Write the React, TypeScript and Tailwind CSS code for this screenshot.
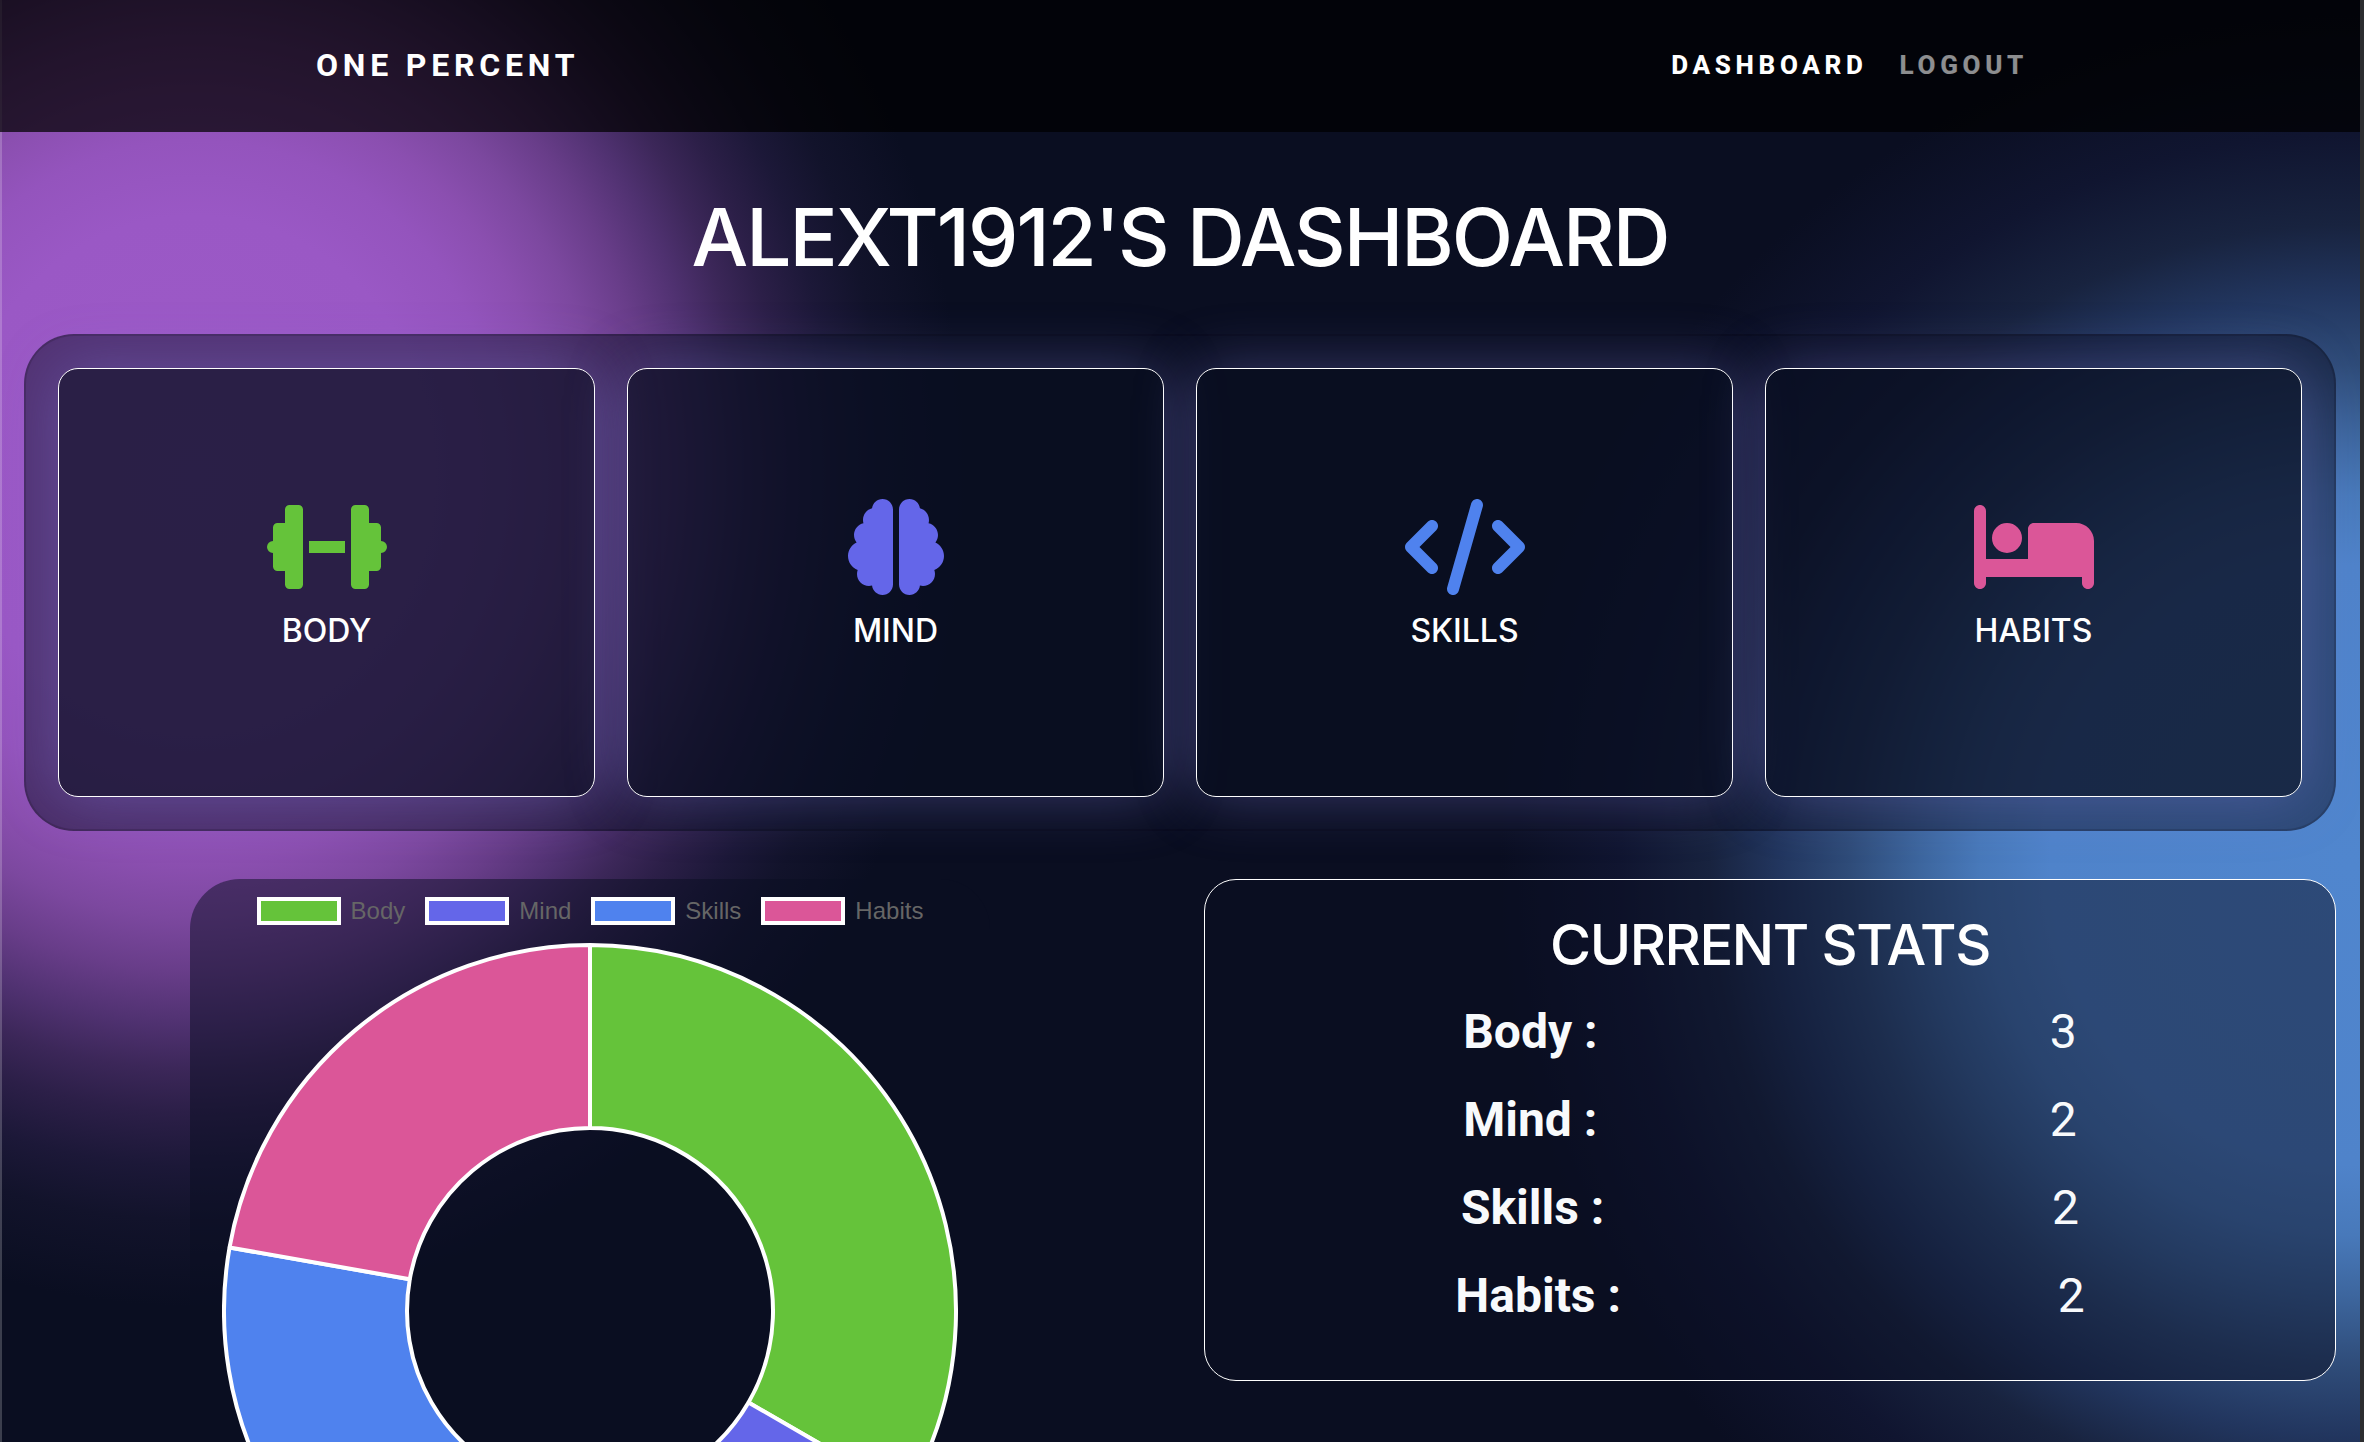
import { FaBed, FaBrain, FaCode } from "react-icons/fa6";
import type { ReactNode } from "react";

function Dumbbell({ className }: { className?: string }) {
  return (
    <svg viewBox="0 0 640 512" fill="currentColor" className={className} aria-hidden="true">
      <path d="M120 32h48a24 24 0 0 1 24 24v400a24 24 0 0 1-24 24h-48a24 24 0 0 1-24-24v-72H56a24 24 0 0 1-24-24v-72a32 32 0 0 1 0-64v-72a24 24 0 0 1 24-24h40V56a24 24 0 0 1 24-24z" />
      <path d="M520 32h-48a24 24 0 0 0-24 24v400a24 24 0 0 0 24 24h48a24 24 0 0 0 24-24v-72h40a24 24 0 0 0 24-24v-72a32 32 0 0 0 0-64v-72a24 24 0 0 0-24-24h-40V56a24 24 0 0 0-24-24z" />
      <path d="M224 224h192v64H224z" />
    </svg>
  );
}

type Area = { name: string; value: number; color: string; swatch: string; icon: ReactNode };

const areas: Area[] = [
  { name: "Body", value: 3, color: "#65c33a", swatch: "bg-[#65c33a]", icon: <Dumbbell className="h-24 w-[120px] text-[#65c33a]" /> },
  { name: "Mind", value: 2, color: "#6466e9", swatch: "bg-[#6466e9]", icon: <FaBrain className="h-24 w-24 text-[#6466e9]" /> },
  { name: "Skills", value: 2, color: "#4f82ee", swatch: "bg-[#4f82ee]", icon: <FaCode className="h-24 w-[120px] text-[#4f82ee]" /> },
  { name: "Habits", value: 2, color: "#db5698", swatch: "bg-[#db5698]", icon: <FaBed className="h-24 w-[120px] text-[#db5698]" /> },
];

const total = areas.reduce((sum, a) => sum + a.value, 0);

function point(radius: number, turn: number) {
  const angle = turn * 2 * Math.PI;
  return `${368 + radius * Math.sin(angle)} ${368 - radius * Math.cos(angle)}`;
}

function Doughnut() {
  let start = 0;
  return (
    <svg viewBox="0 0 736 736" className="block w-full" role="img" aria-label="Progress by area">
      {areas.map((a) => {
        const from = start / total;
        start += a.value;
        const to = start / total;
        return (
          <path
            key={a.name}
            d={`M${point(366, from)} A366 366 0 0 1 ${point(366, to)} L${point(183, to)} A183 183 0 0 0 ${point(183, from)} Z`}
            fill={a.color}
            stroke="#fff"
            strokeWidth={4}
            strokeLinejoin="bevel"
          />
        );
      })}
    </svg>
  );
}

export default function App() {
  return (
    <div className="h-screen overflow-hidden border-r-4 border-[#2c2d30] bg-[#0a0e21] bg-[radial-gradient(1000px_1080px_at_195px_475px,#9d5ac8_0%,#9a58c5_24%,#9454bd_31%,#8b4fb0_36%,#7c489f_41%,#683d89_46%,#4f3170_51%,#3c2759_55%,#2c1f48_59%,#1c1838_64%,#12132b_69%,#0a0e2100_77%),radial-gradient(circle_at_calc(100%_-_10px)_865px,#5086ce_0px,#4f83ca_300px,#4879ba_370px,#3d669e_430px,#2f4c79_500px,#22365f_570px,#18233f_640px,#101530_730px,#0a0e2100_850px)] text-white shadow-[inset_2px_0_0_rgba(255,255,255,0.2)]">
      <header className="bg-black/72">
        <div className="mx-auto flex h-[132px] w-full items-center justify-between pr-[332px] pb-[2px] pl-[316px] font-[Roboto,sans-serif] font-bold">
          <a href="#home" className="text-[32px] tracking-[0.15em]">ONE PERCENT</a>
          <nav className="flex gap-8 text-[26px] font-extrabold tracking-[0.18em]">
            <a href="#dashboard">DASHBOARD</a>
            <a href="#logout" className="text-white/55">LOGOUT</a>
          </nav>
        </div>
      </header>

      <main className="px-6">
        <h1 className="flex h-[202px] items-center justify-center pt-2 font-[Inter,sans-serif] text-[80px] font-medium tracking-tight">
          ALEXT1912'S DASHBOARD
        </h1>

        <section className="grid grid-cols-4 gap-8 rounded-[50px] border-2 border-black/15 bg-[#0a0e21]/50 p-8">
          {areas.map((a) => (
            <button
              key={a.name}
              type="button"
              className="flex h-[429px] flex-col items-center justify-center gap-3 rounded-[20px] border border-white bg-[#0a0e21]/55 pb-3 font-[Inter,sans-serif] text-[32px] leading-12 font-medium shadow-[0_0_60px_rgba(130,125,220,0.38)]"
            >
              {a.icon}
              {a.name.toUpperCase()}
            </button>
          ))}
        </section>

        <div className="mt-12 grid grid-cols-2 items-start gap-12">
          <section className="mx-auto w-[800px] rounded-[50px] bg-[#0a0e21]/50 px-8 pt-4 pb-8">
            <ul className="flex justify-center gap-5 font-['Liberation_Sans',Arial,sans-serif] text-2xl leading-8 text-[#666666]">
              {areas.map((a) => (
                <li key={a.name} className="flex items-center gap-[10px]">
                  <span className={`h-7 w-[84px] border-4 border-white ${a.swatch}`} />
                  {a.name}
                </li>
              ))}
            </ul>
            <div className="mt-4">
              <Doughnut />
            </div>
          </section>

          <section className="rounded-[32px] border border-white bg-[#0a0e21]/50 px-8 pt-[30px] pb-10">
            <h2 className="mb-2 text-center font-[Inter,sans-serif] text-[56px] leading-[70px] font-medium tracking-tight">CURRENT STATS</h2>
            <dl className="font-[Roboto,sans-serif] text-5xl text-[#f8fafc]">
              {areas.map((a) => (
                <div key={a.name} className="flex h-22 items-center justify-around">
                  <dt className="font-bold">{a.name} :</dt>
                  <dd>{a.value}</dd>
                </div>
              ))}
            </dl>
          </section>
        </div>
      </main>
    </div>
  );
}
